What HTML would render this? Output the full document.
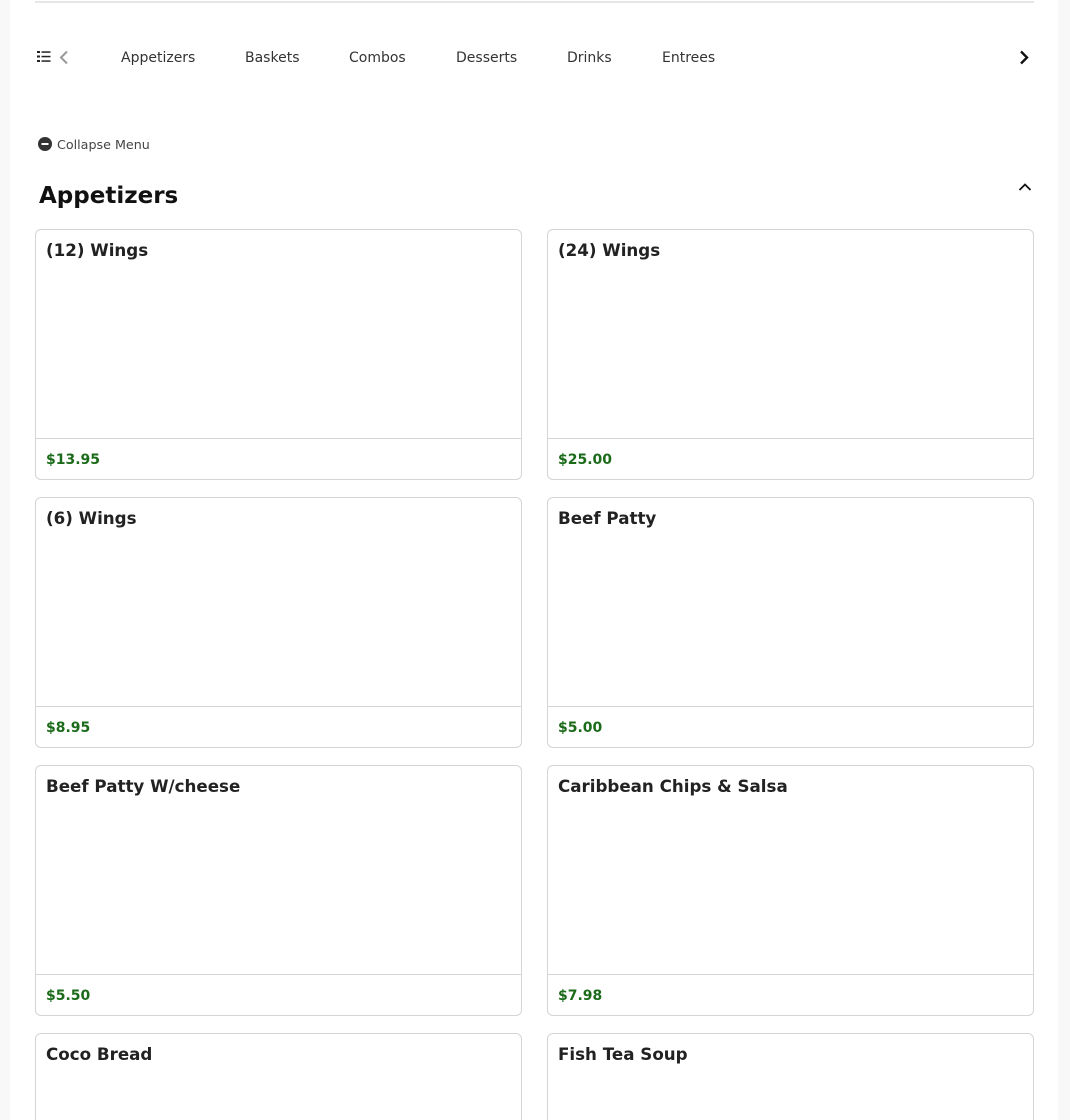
<!DOCTYPE html>
<html style="height:1120px;overflow:hidden"><head><meta charset="utf-8"><style>
html,body{margin:0;padding:0;}
body{width:1070px;height:1120px;overflow:hidden;background:#f8f8f8;font-family:"DejaVu Sans","Liberation Sans",sans-serif;color:#222;position:relative}
.page{position:absolute;left:10px;top:0;width:1048px;height:1120px;background:#fff}
.topline{position:absolute;left:35px;top:1px;width:999px;height:2px;background:#e6e6e6}
.nav{position:absolute;top:50px;font-size:14px;color:#333}
.card{position:absolute;width:485px;height:249px;border:1px solid #d5d5d5;border-radius:6px;background:#fff}
.card .t{position:absolute;left:10px;top:10px;font-size:16.7px;font-weight:bold;color:#222}
.card .f{position:absolute;left:0;right:0;top:208px;border-top:1px solid #d5d5d5}
.card .p{position:absolute;left:10px;top:222px;font-size:14px;font-weight:bold;color:#1b6b1b}
</style></head><body>
<div class="page"></div>
<div class="topline"></div>
<svg style="position:absolute;left:37px;top:50px" width="14" height="13" viewBox="0 0 14 13"><g fill="#222"><rect x="0" y="1" width="3" height="2"/><rect x="0" y="5.5" width="3" height="2"/><rect x="0" y="10" width="3" height="2"/><rect x="4.5" y="1.3" width="9" height="1.5"/><rect x="4.5" y="5.8" width="9" height="1.5"/><rect x="4.5" y="10.3" width="9" height="1.5"/></g></svg>
<svg style="position:absolute;left:58px;top:50px" width="12" height="15" viewBox="0 0 12 15"><path d="M9 1.5 L3 7.5 L9 13.5" stroke="#999" stroke-width="2" fill="none"/></svg>
<div class="nav" style="left:121px">Appetizers</div>
<div class="nav" style="left:245px">Baskets</div>
<div class="nav" style="left:349px">Combos</div>
<div class="nav" style="left:456px">Desserts</div>
<div class="nav" style="left:567px">Drinks</div>
<div class="nav" style="left:662px">Entrees</div>
<svg style="position:absolute;left:1018px;top:50px" width="12" height="15" viewBox="0 0 12 15"><path d="M3 1.5 L9 7.5 L3 13.5" stroke="#111" stroke-width="2.4" fill="none"/></svg>
<svg style="position:absolute;left:38px;top:137px" width="14" height="14" viewBox="0 0 14 14"><circle cx="7" cy="7" r="7" fill="#333"/><rect x="3.5" y="6" width="7" height="2" fill="#fff"/></svg>
<div style="position:absolute;left:57px;top:137px;font-size:12.7px;color:#444">Collapse Menu</div>
<div style="position:absolute;left:39px;top:183px;font-size:23px;font-weight:bold;color:#111">Appetizers</div>
<svg style="position:absolute;left:1018px;top:182px" width="14" height="10" viewBox="0 0 14 10"><path d="M1.5 8 L7 2.5 L12.5 8" stroke="#111" stroke-width="1.8" fill="none"/></svg>

<div class="card" style="left:35px;top:229px"><div class="t">(12) Wings</div><div class="f"></div><div class="p">$13.95</div></div>
<div class="card" style="left:547px;top:229px"><div class="t">(24) Wings</div><div class="f"></div><div class="p">$25.00</div></div>
<div class="card" style="left:35px;top:497px"><div class="t">(6) Wings</div><div class="f"></div><div class="p">$8.95</div></div>
<div class="card" style="left:547px;top:497px"><div class="t">Beef Patty</div><div class="f"></div><div class="p">$5.00</div></div>
<div class="card" style="left:35px;top:765px"><div class="t">Beef Patty W/cheese</div><div class="f"></div><div class="p">$5.50</div></div>
<div class="card" style="left:547px;top:765px"><div class="t">Caribbean Chips &amp; Salsa</div><div class="f"></div><div class="p">$7.98</div></div>
<div class="card" style="left:35px;top:1033px;height:120px"><div class="t">Coco Bread</div></div>
<div class="card" style="left:547px;top:1033px;height:120px"><div class="t">Fish Tea Soup</div></div>
</body></html>
